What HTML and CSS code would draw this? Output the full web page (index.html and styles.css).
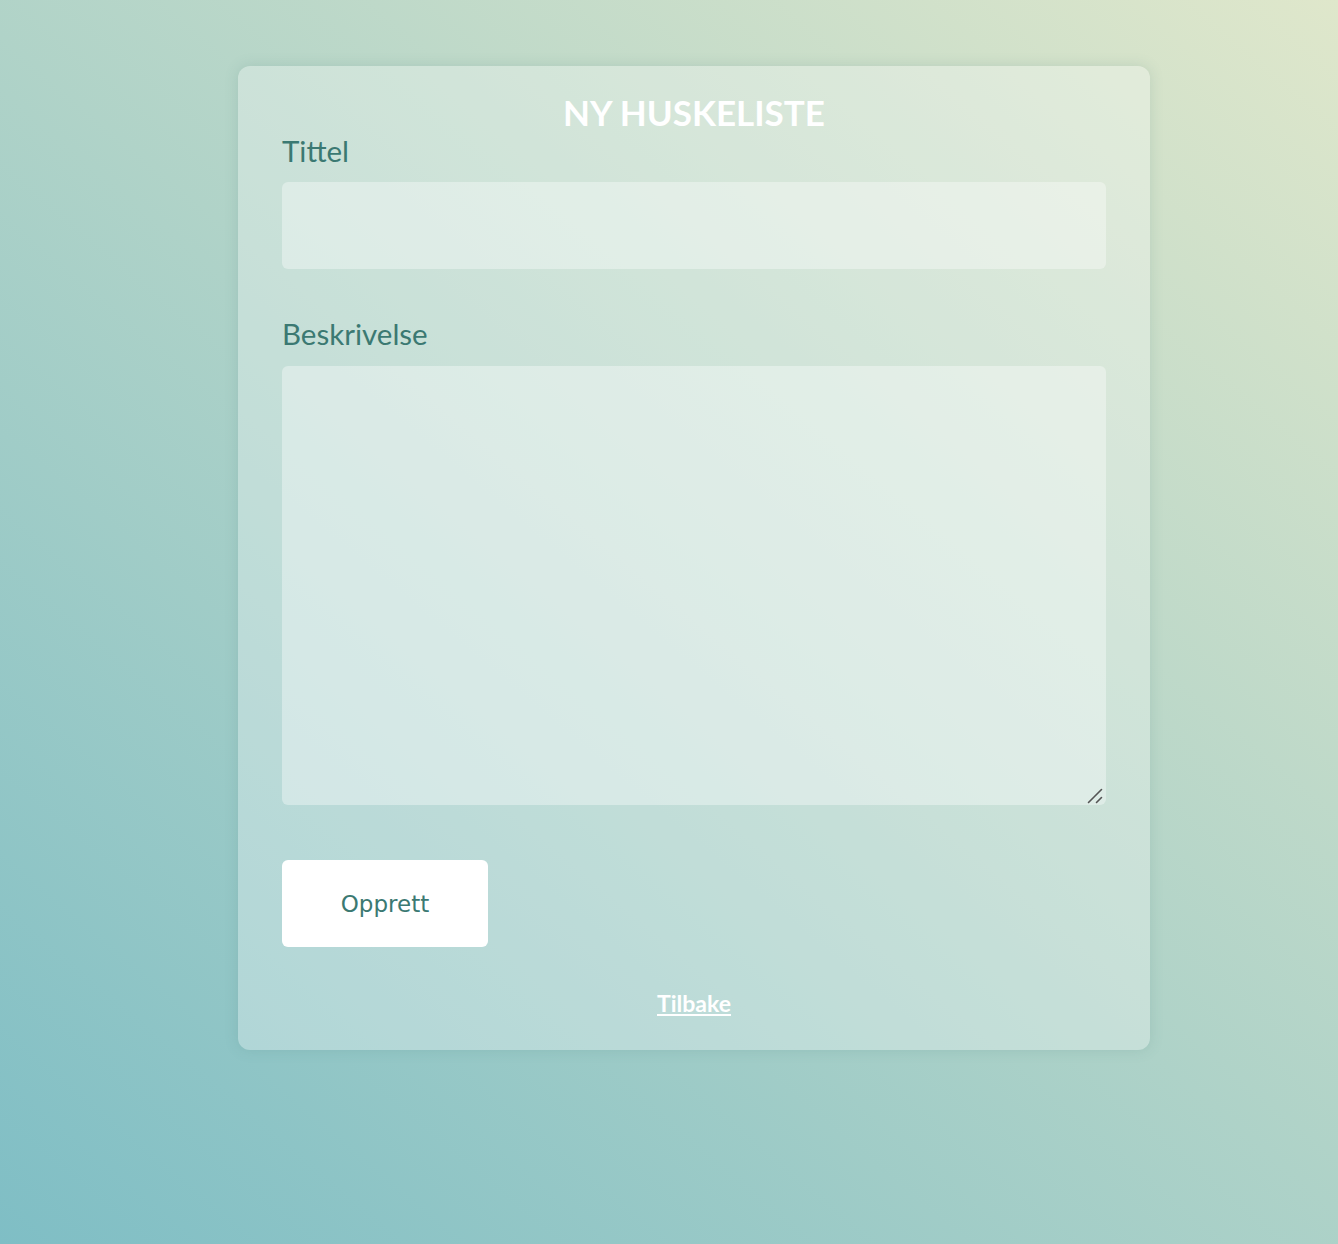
FILE: index.html
```html
<!DOCTYPE html>
<html lang="no">
<head>
<meta charset="utf-8">
<title>Ny huskeliste</title>
<link rel="stylesheet" href="styles.css">
</head>
<body>
<main class="card">
  <h1 class="title">NY HUSKELISTE</h1>
  <form class="form">
    <label class="label" for="tittel">Tittel</label>
    <input class="field" id="tittel" type="text">
    <label class="label label-desc" for="beskrivelse">Beskrivelse</label>
    <div class="area-wrap">
      <textarea class="field area" id="beskrivelse"></textarea>
      <svg class="grip" width="16" height="16" viewBox="0 0 16 16" aria-hidden="true">
        <path d="M1.5 14.5 L14.5 1.5 M9.5 14.5 L14.5 9.5" stroke="#555" stroke-width="1.6" stroke-linecap="round" fill="none"/>
      </svg>
    </div>
    <button class="btn" type="button">Opprett</button>
  </form>
  <div class="back"><a href="#">Tilbake</a></div>
</main>
</body>
</html>
```
FILE: styles.css
```css
html {
  min-height: 100%;
  background: linear-gradient(40deg, #7fbec5 0%, #dfe7cb 100%);
}
body {
  margin: 0;
  min-height: 1244px;
  font-family: Lato, "Open Sans", sans-serif;
}
.card {
  box-sizing: border-box;
  width: 912px;
  margin: 66px 0 0 238px;
  padding: 26px 44px 30px;
  border-radius: 12px;
  background: rgba(255, 255, 255, 0.3);
  box-shadow: 0 0 14px rgba(80, 130, 120, 0.18);
}
.title {
  margin: 0;
  text-align: center;
  color: #fff;
  font-size: 35px;
  line-height: 40px;
  font-weight: 700;
}
.form {
  display: flex;
  flex-direction: column;
  align-items: flex-start;
}
.label {
  display: block;
  margin-top: 2px;
  color: #3b7972;
  font-size: 29.5px;
  line-height: 34px;
}
.label-desc {
  margin-top: 48px;
}
.field {
  box-sizing: border-box;
  width: 824px;
  height: 87px;
  margin-top: 14px;
  border: none;
  border-radius: 6px;
  background: rgba(255, 255, 255, 0.36);
  font-family: Lato, sans-serif;
  font-size: 18px;
  outline: none;
}
.area-wrap {
  position: relative;
  margin-top: 15px;
  width: 824px;
  height: 439px;
}
.area {
  display: block;
  height: 439px;
  margin-top: 0;
  resize: none;
}
.grip {
  position: absolute;
  right: 3px;
  bottom: 1px;
  pointer-events: none;
}
.btn {
  width: 206px;
  height: 87px;
  margin-top: 55px;
  border: none;
  border-radius: 6px;
  background: #fff;
  color: #3b7972;
  font-family: "DejaVu Sans", sans-serif;
  font-size: 23px;
}
.back {
  margin-top: 42px;
  text-align: center;
  line-height: 28px;
}
.back a {
  color: #fff;
  font-size: 23px;
  font-weight: 700;
  text-decoration: underline;
}
```
